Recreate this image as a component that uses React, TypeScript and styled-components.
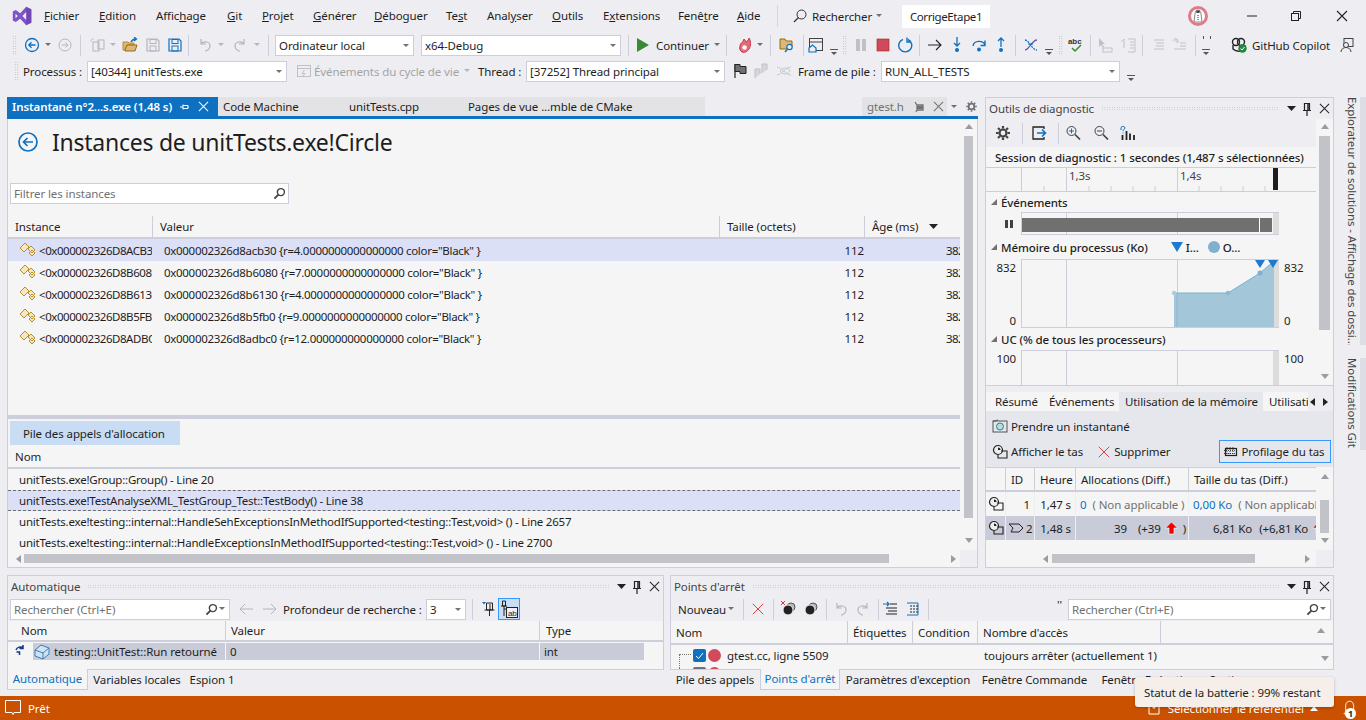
import React from "react";
import styled, { createGlobalStyle } from "styled-components";

const Global = createGlobalStyle`
  html, body { margin: 0; padding: 0; background: #eeeef2; }
  * { box-sizing: border-box; }
  body { font-family: "Noto Sans", "Open Sans", sans-serif; font-size: 11.5px; letter-spacing: -0.1px; color: #1e1e1e; }
`;

const Page = styled.div`
  position: relative; width: 1366px; height: 720px; overflow: hidden; background: #eeeef2;
  display: flex; flex-direction: column;
`;
const Svg = styled.svg`display: block; flex: none;`;

/* ---------- title/menu bar ---------- */
const MenuBar = styled.div`height: 32px; display: flex; align-items: center; padding-left: 12px; flex: none;`;
const LogoSlot = styled.div`width: 32px; flex: none;`;
const MenuItem = styled.div<{ $w: number }>`width: ${p => p.$w}px; flex: none; white-space: nowrap; padding-bottom: 1px;`;
const MenuSep = styled.div`width: 1px; height: 22px; background: #d5d6de; flex: none; margin-right: 15px;`;
const SearchLabel = styled.div`margin-left: 5px; width: 60px; white-space: nowrap;`;
const SolutionBox = styled.div`
  margin-left: 19px; width: 88px; height: 23px; background: #fff; display: flex; align-items: center; justify-content: center;
  white-space: nowrap; flex: none; letter-spacing: -0.4px;
`;
const Avatar = styled.div`
  margin-left: 198px; width: 20px; height: 20px; border-radius: 50%; background: #fff; border: 3px solid #e07a88; flex: none;
  display: flex; align-items: center; justify-content: center; overflow: hidden;
`;
const WinBtn = styled.div<{ $ml: number }>`margin-left: ${p => p.$ml}px; width: 12px; flex: none;`;

/* ---------- toolbars ---------- */
const ToolRow = styled.div<{ $h: number; $pl: number; $mt?: number }>`
  height: ${p => p.$h}px; padding-left: ${p => p.$pl}px; margin-top: ${p => p.$mt ?? 0}px; display: flex; align-items: center; flex: none;
`;
const Tool = styled.div<{ $w?: number; $ml?: number }>`
  width: ${p => p.$w ?? 16}px; margin-left: ${p => p.$ml ?? 0}px; flex: none; display: flex; align-items: center; justify-content: center;
`;
const Grip = styled.div<{ $ml?: number }>`
  width: 5px; height: 20px; margin-left: ${p => p.$ml ?? 0}px; flex: none;
  background-image: radial-gradient(#a9abb8 0.7px, transparent 0.8px); background-size: 2.5px 2.5px;
`;
const Caret = styled.div<{ $ml?: number; $dim?: boolean }>`
  width: 8px; margin-left: ${p => p.$ml ?? 0}px; flex: none; height: 4px; position: relative;
  &::after { content: ""; display: block; margin: 0 auto; width: 0; height: 0; border-left: 3px solid transparent; border-right: 3px solid transparent;
    border-top: 3px solid ${p => (p.$dim ? "#b4b5bd" : "#717171")}; }
`;
const VSep = styled.div<{ $ml?: number }>`width: 1px; height: 21px; margin-left: ${p => p.$ml ?? 0}px; background: #cccedb; flex: none;`;
const Overflow = styled.div<{ $ml?: number; $marks?: boolean }>`
  width: 8px; margin-left: ${p => p.$ml ?? 0}px; margin-top: 13px; flex: none; border-top: 1px solid #555; position: relative;
  &::after { content: ""; display: block; margin: 2px auto 0; width: 0; height: 0; border-left: 3px solid transparent; border-right: 3px solid transparent; border-top: 3px solid #555; }
  ${p => (p.$marks ? `&::before { content: ""; position: absolute; left: 1px; top: -14px; width: 6px; height: 3px; border-left: 1px solid #555; border-right: 1px solid #555; }` : "")}
`;
const Label = styled.div<{ $w: number; $ml?: number; $dim?: boolean }>`
  width: ${p => p.$w}px; margin-left: ${p => p.$ml ?? 0}px; flex: none; white-space: nowrap; color: ${p => (p.$dim ? "#a2a4a5" : "#1e1e1e")};
`;
const TabLabel = styled(Label)`color: #717171;`;
const Marks = styled(Label)`margin-bottom: 10px;`;
const Combo = styled.div<{ $w: number; $ml?: number }>`
  width: ${p => p.$w}px; height: 21px; margin-left: ${p => p.$ml ?? 0}px; flex: none; background: #fff; border: 1px solid #cccedb;
  display: flex; align-items: center; justify-content: space-between; padding: 0 0 0 3px; white-space: nowrap;
  &::after { content: ""; width: 0; height: 0; border-left: 3px solid transparent; border-right: 3px solid transparent; border-top: 3px solid #717171; margin-right: 4px; }
`;

/* ---------- work area ---------- */
const Work = styled.div`margin-top: 14px; display: flex; flex: none; height: 595px;`;
const MainCol = styled.div`width: 1334px; padding-left: 7px; display: flex; flex-direction: column; flex: none;`;
const TopRow = styled.div`display: flex; gap: 7px; height: 471px; flex: none;`;
const BottomRow = styled.div`display: flex; gap: 6px; height: 117px; margin-top: 7px; flex: none;`;
const Rail = styled.div`width: 32px; flex: none; display: flex; flex-direction: column; gap: 13px; padding-top: 0;`;
const RailTab = styled.div<{ $h: number }>`
  height: ${p => p.$h}px; writing-mode: vertical-rl; white-space: nowrap; overflow: hidden; color: #444;
  padding-left: 4px; border-right: 6px solid #dcdde5; line-height: 16px;
`;

/* doc well */
const DocWell = styled.div`width: 971px; display: flex; flex-direction: column; flex: none;`;
const TabStrip = styled.div`height: 22px; border-bottom: 3px solid #0e70c0; display: flex; align-items: stretch; flex: none;`;
const ActiveDoc = styled.div`
  width: 211px; background: #0e70c0; color: #fff; display: flex; align-items: center; padding-left: 5px; font-weight: 600; white-space: nowrap; flex: none;
`;
const DocTab = styled.div<{ $w: number; $bg?: string }>`
  width: ${p => p.$w}px; background: ${p => p.$bg ?? "#e3e3e6"}; display: flex; align-items: center; padding-left: 5px; white-space: nowrap; flex: none;
`;
const TabFill = styled.div`flex: 1;`;
const TabCaret = styled(Caret)`margin-top: 8px;`;
const DocPanel = styled.div`
  flex: 1; min-height: 0; background: #f5f5f5; border: 1px solid #cccedb; border-top: 0; display: grid;
  grid-template-columns: 952px 17px; grid-template-rows: 431px 17px;
`;
const DocLeft = styled.div`display: flex; flex-direction: column; min-width: 0; overflow: hidden;`;
const HeadLine = styled.div`height: 64px; display: flex; align-items: flex-start; padding: 13px 0 0 10px; flex: none;`;
const BigTitle = styled.div`font-size: 23px; line-height: 21px; margin-left: 14px; letter-spacing: -0.25px; white-space: nowrap; color: #1e1e1e;`;
const FilterBox = styled.div`
  width: 279px; height: 21px; margin-left: 2px; background: #fff; border: 1px solid #cccedb; display: flex; align-items: center;
  justify-content: space-between; padding: 0 2px 0 3px; color: #717171; flex: none;
`;
const GridHead = styled.div<{ $mt?: number; $h: number }>`
  height: ${p => p.$h}px; margin-top: ${p => p.$mt ?? 0}px; display: flex; border-bottom: 2px solid #cccedb; flex: none;
`;
const HeadCell = styled.div<{ $w: number; $flex?: boolean }>`
  width: ${p => p.$w}px; flex: none; padding-left: 7px; display: flex; align-items: center; justify-content: ${p => (p.$flex ? "space-between" : "flex-start")};
  border-right: 1px solid #cccedb; white-space: nowrap; padding-right: 22px;
  &:last-child { border-right: 0; }
`;
const InstanceList = styled.div`height: 176px; flex: none; padding-top: 0;`;
const InstanceRow = styled.div<{ $sel?: boolean }>`
  height: 22px; display: flex; align-items: center; background: ${p => (p.$sel ? "#dce0f7" : "transparent")};
`;
const InstName = styled.div`width: 144px; flex: none; overflow: hidden; white-space: nowrap; display: flex; align-items: center; padding-left: 11px; gap: 2px; letter-spacing: -0.45px;`;
const InstValue = styled.div`width: 567px; flex: none; padding-left: 12px; white-space: nowrap; letter-spacing: -0.3px;`;
const InstSize = styled.div`width: 145px; flex: none; text-align: right;`;
const InstAge = styled.div`width: 96px; flex: none; overflow: hidden; padding-left: 82px; white-space: nowrap; letter-spacing: -0.6px;`;
const Splitter = styled.div`height: 6px; flex: none; border-top: 4px solid #cccedb;`;
const SubTab = styled.div`
  width: 170px; height: 24px; margin-left: 2px; background: #c8ddf4; display: flex; align-items: center; padding-left: 13px; flex: none;
`;
const StackRow = styled.div<{ $sel?: boolean }>`
  height: 21px; flex: none; display: flex; align-items: center; padding-left: 11px; white-space: nowrap; overflow: hidden; position: relative;
  ${p => (p.$sel ? "background:#dce0f7; border-top:1px dashed #6d6d6d; border-bottom:1px dashed #6d6d6d;" : "")}
`;
const StackText = styled.div`width: 556px; overflow: hidden; white-space: nowrap; flex: none; letter-spacing: -0.22px;`;

/* scrollbars */
const VTrack = styled.div<{ $pt: number; $w?: number }>`
  width: ${p => p.$w ?? 17}px; display: flex; flex-direction: column; align-items: center; padding-top: ${p => p.$pt}px; flex: none; position: relative; min-height: 0;
`;
const VThumb = styled.div<{ $h: number; $mt: number; $w?: number }>`width: ${p => p.$w ?? 9}px; height: ${p => p.$h}px; margin-top: ${p => p.$mt}px; background: #c2c3c9; flex: none;`;
const ArrowUp = styled.div`width: 0; height: 0; border-left: 4.5px solid transparent; border-right: 4.5px solid transparent; border-bottom: 5px solid #9a9ba3; flex: none;`;
const ArrowDown = styled.div<{ $mt: number }>`width: 0; height: 0; margin-top: ${p => p.$mt}px; border-left: 4.5px solid transparent; border-right: 4.5px solid transparent; border-top: 5px solid #9a9ba3; flex: none;`;
const HTrack = styled.div<{ $pl: number }>`display: flex; align-items: center; padding-left: ${p => p.$pl}px; height: 17px; flex: none; min-width: 0;`;
const HThumb = styled.div<{ $w: number; $ml: number }>`width: ${p => p.$w}px; height: 9px; margin-left: ${p => p.$ml}px; background: #c2c3c9; flex: none;`;
const ArrowLeft = styled.div`width: 0; height: 0; border-top: 4.5px solid transparent; border-bottom: 4.5px solid transparent; border-right: 5px solid #9a9ba3; flex: none;`;
const ArrowRight = styled.div<{ $ml: number }>`width: 0; height: 0; margin-left: ${p => p.$ml}px; border-top: 4.5px solid transparent; border-bottom: 4.5px solid transparent; border-left: 5px solid #9a9ba3; flex: none;`;
const Corner = styled.div`background: #eeeef2;`;

/* tool window chrome */
const ToolWin = styled.div<{ $w: number }>`width: ${p => p.$w}px; flex: none; display: flex; flex-direction: column; min-height: 0;`;
const ToolBox = styled.div<{ $h?: number }>`
  border: 1px solid #cccedb; display: flex; flex-direction: column; background: #eeeef2; min-height: 0;
  ${p => (p.$h ? `height: ${p.$h}px; flex: none;` : "flex: 1;")}
`;
const WinTitle = styled.div`height: 21px; display: flex; align-items: center; padding: 0 3px 0 3px; flex: none;`;
const WinName = styled.div`white-space: nowrap; color: #444; flex: none;`;
const Dots = styled.div`
  flex: 1; height: 5px; margin: 0 8px 0 7px;
  background-image: radial-gradient(#b4b6c4 0.6px, transparent 0.7px); background-size: 2.5px 2.5px;
`;

/* diagnostics */
const DiagBody = styled.div`height: 266px; display: grid; grid-template-columns: 1fr 17px; background: #f5f5f5; flex: none; overflow: hidden; padding-top: 0;`;
const DiagMain = styled.div`min-width: 0; display: flex; flex-direction: column; overflow: hidden;`;
const DiagBar = styled.div`height: 28px; background: #eeeef2; display: flex; align-items: center; padding-left: 9px; flex: none;`;
const Session = styled.div`height: 21px; padding-left: 9px; display: flex; align-items: center; font-weight: 500; white-space: nowrap; border-bottom: 1px solid #cccedb; flex: none; font-size: 11.5px;`;
const Ruler = styled.div`height: 24px; margin-bottom: 0; border-bottom: 1px solid #cccedb; flex: none;`;
const SectionHead = styled.div<{ $h: number }>`height: ${p => p.$h}px; display: flex; align-items: center; padding-left: 5px; font-weight: 500; white-space: nowrap; flex: none;`;
const Tri = styled.span`
  display: inline-block; width: 0; height: 0; border-left: 6px solid transparent; border-bottom: 6px solid #717171; margin-right: 4px;
`;
const LegendMark = styled.span<{ $ml: number }>`margin-left: ${p => p.$ml}px; display: inline-flex; margin-right: 3px;`;
const ChartRow = styled.div<{ $h: number }>`height: ${p => p.$h}px; display: grid; grid-template-columns: 35px 258px 1fr; flex: none;`;
const AxisCol = styled.div<{ $left?: boolean }>`
  display: flex; flex-direction: column; justify-content: space-between; padding: 1px ${p => (p.$left ? "5px" : "0")} 0 ${p => (p.$left ? "0" : "5px")};
  text-align: ${p => (p.$left ? "right" : "left")}; line-height: 15px; align-items: ${p => (p.$left ? "flex-end" : "flex-start")};
`;
const PauseCol = styled.div`display: flex; align-items: center; justify-content: flex-end; padding-right: 8px; gap: 2px;`;
const PauseBar = styled.div`width: 3px; height: 8px; background: #424242;`;
const LowerSplit = styled.div`height: 7px; flex: none; background: #eeeef2; border-top: 1px solid #cccedb;`;
const SubTabs = styled.div`height: 19px; background: #f5f5f5; display: flex; align-items: center; padding-left: 3px; flex: none;`;
const SubTabItem = styled.div<{ $w: number; $on?: boolean }>`
  width: ${p => p.$w}px; height: 19px; flex: none; display: flex; align-items: center; padding-left: 6px; white-space: nowrap; overflow: hidden;
  background: ${p => (p.$on ? "#e6e7ed" : "transparent")};
`;
const ArrowPair = styled.div`display: flex; gap: 8px; align-items: center; height: 19px; padding-left: 2px; background: #eeeef2; width: 25px;`;
const MiniL = styled.div`width: 0; height: 0; border-top: 4px solid transparent; border-bottom: 4px solid transparent; border-right: 5px solid #222;`;
const MiniR = styled.div`width: 0; height: 0; border-top: 4px solid transparent; border-bottom: 4px solid transparent; border-left: 5px solid #222;`;
const SnapPanel = styled.div`height: 56px; background: #e6e7ed; display: flex; flex-direction: column; flex: none; padding: 3px 0 0 6px;`;
const SnapLine = styled.div<{ $h: number }>`height: ${p => p.$h}px; display: flex; align-items: center; white-space: nowrap;`;
const SnapBtn = styled.div<{ $ml?: number }>`display: flex; align-items: center; gap: 3px; margin-left: ${p => p.$ml ?? 0}px; flex: none;`;
const HeapBtn = styled.div`
  margin-left: 48px; width: 112px; height: 23px; border: 1px solid #3399ff; display: flex; align-items: center; gap: 3px; padding-left: 3px; flex: none; background: #e6e7ed;
`;
const SnapGrid = styled.div`height: 83px; display: grid; grid-template-columns: 330px 17px; background: #f5f5f5; flex: none;`;
const SnapCols = styled.div`min-width: 0; overflow: hidden; display: flex; flex-direction: column;`;
const SnapHead = styled.div`height: 25px; display: grid; grid-template-columns: 20px 29px 41px 113px 127px; border-top: 1px solid #cccedb; border-bottom: 2px solid #cccedb; flex: none;`;
const SnapHeadCell = styled.div`display: flex; align-items: center; padding-left: 5px; border-right: 1px solid #cccedb; white-space: nowrap; overflow: hidden; &:last-child { border-right: 0; }`;
const SnapRow = styled.div<{ $sel?: boolean }>`
  height: 24px; display: grid; grid-template-columns: 20px 29px 41px 113px 127px; flex: none; background: ${p => (p.$sel ? "#c9cbd9" : "transparent")};
`;
const SnapCell = styled.div<{ $right?: boolean; $pad?: number }>`
  display: flex; align-items: center; justify-content: ${p => (p.$right ? "flex-end" : "flex-start")}; padding: 0 ${p => (p.$right ? 4 : 0)}px 0 ${p => p.$pad ?? 0}px;
  white-space: nowrap; overflow: hidden; border-right: 1px solid #eeeeee; &:last-child { border-right: 0; }
`;
const Blue = styled.span`color: #0e70c0;`;
const Gray = styled.span<{ $ml?: number }>`color: #717171; margin-left: ${p => p.$ml ?? 0}px;`;
const Plain = styled.span<{ $ml?: number }>`margin-left: ${p => p.$ml ?? 0}px; flex: none; display: inline-flex; align-items: center;`;
const SnapBottom = styled.div`height: 17px; display: grid; grid-template-columns: 330px 17px; background: #f5f5f5; flex: none;`;

/* lower panels */
const PanelBar = styled.div<{ $pl?: number }>`height: 24px; display: flex; align-items: center; flex: none; padding-left: ${p => p.$pl ?? 2}px;`;
const SearchBox = styled.div<{ $w: number; $ml?: number }>`
  width: ${p => p.$w}px; height: 21px; margin-left: ${p => p.$ml ?? 0}px; background: #fff; border: 1px solid #cccedb; display: flex; align-items: center; flex: none;
  justify-content: space-between; padding: 0 3px 0 3px; color: #717171; white-space: nowrap;
`;
const PinBox = styled.div`width: 22px; height: 22px; margin-left: 1px; background: #c9def5; border: 1px solid #3399ff; flex: none; display: flex; align-items: center; justify-content: center;`;
const TableArea = styled.div`flex: 1; background: #f5f5f5; min-height: 0; overflow: hidden; display: flex; flex-direction: column;`;
const THead = styled.div<{ $h: number }>`height: ${p => p.$h}px; display: flex; border-bottom: 2px solid #cccedb; flex: none;`;
const THCell = styled.div<{ $w: number; $pl?: number; $last?: boolean }>`
  width: ${p => p.$w}px; flex: none; display: flex; align-items: center; padding-left: ${p => p.$pl ?? 5}px;
  border-right: ${p => (p.$last ? "0" : "1px solid #cccedb")}; white-space: nowrap;
`;
const HeadArrow = styled.div`margin: 7px 8px 0 auto; flex: none;`;
const AutoRow = styled.div`display: flex; align-items: stretch; height: 17px; margin-top: 1px; flex: none;`;
const AutoGutter = styled.div`width: 25px; flex: none; padding: 1px 0 0 6px;`;
const AutoCell = styled.div<{ $w: number; $pl?: number }>`
  width: ${p => p.$w}px; flex: none; background: #c9cbd9; display: flex; align-items: center; padding-left: ${p => p.$pl ?? 4}px; border-right: 1px solid #f5f5f5; white-space: nowrap; gap: 4px;
`;
const BpGrid = styled.div`flex: 1; display: grid; grid-template-columns: 1fr 17px; min-height: 0;`;
const BpList = styled.div`overflow: hidden; min-height: 0;`;
const BpRow = styled.div<{ $top?: boolean }>`height: 22px; display: flex; align-items: ${p => (p.$top ? "flex-start" : "center")}; flex: none; padding-bottom: ${p => (p.$top ? 0 : 1)}px;`;
const BpName = styled.div<{ $top?: boolean }>`width: 313px; flex: none; display: flex; align-items: ${p => (p.$top ? "flex-start" : "center")}; padding-left: 8px; gap: 2px; white-space: nowrap;`;
const TreeDots = styled.div`width: 12px; height: 14px; margin-top: 10px; border-left: 1px dotted #777; border-top: 1px dotted #777; flex: none;`;
const TreeStem = styled.div`width: 12px; height: 4px; border-left: 1px dotted #777; flex: none;`;
const Check = styled.div<{ $dim?: boolean }>`width: 13px; height: 13px; border-radius: 2px; background: ${p => (p.$dim ? "#717171" : "#0e70c0")}; flex: none; display: flex; align-items: center; justify-content: center;`;
const BpDot = styled.div`width: 13px; height: 13px; border-radius: 50%; background: #d1495b; flex: none;`;
const PanelTabs = styled.div`height: 20px; display: flex; flex: none; white-space: nowrap; margin-top: -1px;`;
const PanelTab = styled.div<{ $w: number; $on?: boolean }>`
  width: ${p => p.$w}px; flex: none; height: 21px; display: flex; align-items: center; justify-content: center; padding-bottom: 1px;
  ${p => (p.$on ? "background:#f5f5f5; color:#0e70c0; border:1px solid #cccedb; border-top:0;" : "")}
`;

/* status */
const Status = styled.div`
  height: 24px; margin-top: 4px; background: #ca5100; color: #fff; display: flex; align-items: center; padding-left: 5px; flex: none;
`;
const StatusText = styled.div<{ $ml: number }>`margin-left: ${p => p.$ml}px; white-space: nowrap; flex: none; color: #fff;`;
const Badge = styled.div`
  position: absolute; right: 10px; top: 12px; width: 11px; height: 11px; border-radius: 50%; background: #fff; color: #1e1e1e; font-size: 9px; font-weight: 700;
  display: flex; align-items: center; justify-content: center; letter-spacing: 0;
`;
const BellWrap = styled.div`position: absolute; right: 0; bottom: 0; width: 32px; height: 24px; display: flex; align-items: center; padding-left: 9px;`;
const Tip = styled.div`
  position: absolute; left: 1135px; top: 677px; width: 199px; height: 30px; background: #f6efe9; border-radius: 3px; box-shadow: 0 1px 3px rgba(0,0,0,.25);
  display: flex; align-items: center; padding-left: 9px; white-space: nowrap; color: #1e1e1e;
`;

/* ---------- icons ---------- */
type P = { s?: number; c?: string };
const I: React.FC<{ s?: number; children: React.ReactNode }> = ({ s = 16, children }) => (
  <Svg width={s} height={s} viewBox="0 0 16 16" fill="none">{children}</Svg>
);
const Logo = () => (
  <Svg width="20" height="20" viewBox="0 0 20 20">
    <path fillRule="evenodd" fill="#7d55c7" d="M14.2 0.8 19.4 3.3V16.7L14.2 19.2 8.2 12.8 3.8 16 0.8 14.4V5.6L3.8 4 8.2 7.2ZM14.2 6 10.4 10 14.2 14ZM3.5 7.8V12.2L5.9 10Z" />
    <path fill="#5c2d91" d="M14.2 0.8 19.4 3.3V16.7L14.2 19.2Z" opacity=".35" />
  </Svg>
);
const ArrowBack: React.FC<{ c?: string }> = ({ c = "#0e70c0" }) => (
  <I><circle cx="8" cy="8" r="6.5" stroke={c} strokeWidth="1.3" /><path d="M11.5 8H5M7.5 5.3 4.8 8l2.7 2.7" stroke={c} strokeWidth="1.3" /></I>
);
const ArrowFwd = () => (
  <I><circle cx="8" cy="8" r="6" stroke="#b4b5bd" /><path d="M4.5 8H11M8.5 5.5 11 8l-2.5 2.5" stroke="#b4b5bd" /></I>
);
const CopyDim = () => (
  <I><path d="M2 2l1 1M4 1v2M1 4h2" stroke="#c6c7cf" /><rect x="4" y="5" width="6" height="9" stroke="#b4b5bd" /><rect x="9" y="3" width="6" height="9" stroke="#b4b5bd" /></I>
);
const OpenFolder = () => (
  <I><path d="M1 5h5l1 1h5v2H5L3 13H1Z" fill="#dcb67a" stroke="#b58a3a" /><path d="M3 13 5 8h10l-2 6H3Z" fill="#dcb67a" stroke="#996f00" /><path d="M9 5c1-2 3-3 5-3M12 0l2.5 2L12 4" stroke="#0e70c0" strokeWidth="1.3" /></I>
);
const Save: React.FC<{ c: string }> = ({ c }) => (
  <I><path d="M2 2h10l2 2v10H2Z" stroke={c} strokeWidth="1.2" /><rect x="5" y="2.5" width="6" height="4" stroke={c} /><rect x="5" y="9" width="6" height="5" stroke={c} /></I>
);
const Undo = () => <I><path d="M4 2v5h5M4 7c2-3 9-3 9 2 0 3-3 5-5 5" stroke="#b4b5bd" strokeWidth="1.2" /></I>;
const Redo = () => <I><path d="M12 2v5H7M12 7c-2-3-9-3-9 2 0 3 3 5 5 5" stroke="#b4b5bd" strokeWidth="1.2" /></I>;
const Play = () => <Svg width="14" height="16" viewBox="0 0 14 16"><path d="M1 1 13 8 1 15Z" fill="#388a34" /></Svg>;
const Fire = () => (
  <I><path d="M3 9c0-3 3-3 4-7 1 1 2 2 2 3 2-1 3-3 3-4 2 3 2 8 0 11-2 3-5 4-7 3s-3-4-2-6Z" fill="#e66a78" stroke="#c5364a" /><circle cx="7.5" cy="10.5" r="2.3" fill="#fff" /></I>
);
const SearchFolder = () => (
  <I><path d="M1 2h5l1 2h6v5H9l-2 3H1Z" fill="#dcb67a" stroke="#996f00" /><circle cx="10.5" cy="10" r="2.7" stroke="#0e70c0" strokeWidth="1.2" fill="#eeeef2" /><path d="M8.5 12.2 6 15" stroke="#0e70c0" strokeWidth="1.5" /></I>
);
const WinHome = () => (
  <I><rect x="1.5" y="1.5" width="13" height="12" stroke="#424242" /><path d="M1.5 5h13" stroke="#424242" /><path d="M1 11 4.500 8 8 11v4H1Z" fill="#eeeef2" stroke="#0e70c0" strokeWidth="1.2" /></I>
);
const Pause2 = () => <I><rect x="3" y="2" width="4" height="12" fill="#c0c1c8" /><rect x="9" y="2" width="4" height="12" fill="#c0c1c8" /></I>;
const Stop = () => <I><rect x="2" y="2" width="12" height="12" fill="#d1495b" stroke="#a1260d" strokeWidth=".6" /></I>;
const Restart = () => <I><path d="M6 2.300A6.500 6.500 0 1 0 11 2.500M10 0.500V5h4" stroke="#0e70c0" strokeWidth="1.4" /></I>;
const ArrowNext = () => <I><path d="M1 8h13M9 3l5 5-5 5" stroke="#222" strokeWidth="1.1" /></I>;
const StepInto = () => <I><path d="M8 0v9M5 6l3 3 3-3" stroke="#0e70c0" strokeWidth="1.3" /><circle cx="8" cy="13" r="2" fill="#0e70c0" /></I>;
const StepOver = () => <I><path d="M2 9C3 3 12 3 14 8M14 3.500V8.500H9.500" stroke="#0e70c0" strokeWidth="1.4" /><circle cx="8" cy="12.500" r="2" fill="#0e70c0" /></I>;
const StepOut = () => <I><path d="M8 10V1M5 4l3-3 3 3" stroke="#0e70c0" strokeWidth="1.3" /><circle cx="8" cy="13" r="2" fill="#0e70c0" /></I>;
const Swap = () => <I><path d="M2 13C6 13 9 3 14 3" stroke="#6b52a8" strokeWidth="1.3" /><path d="M2 3C6 3 9 13 14 13" stroke="#0e70c0" strokeWidth="1.3" strokeDasharray="2 1" /><path d="M5 7h5" stroke="#0e70c0" /></I>;
const Abc = () => (
  <I><text x="0" y="7" fontSize="8" fill="#333" fontFamily="Liberation Sans" fontWeight="700">abc</text><path d="M4 11l3 3 6-6" stroke="#388a34" strokeWidth="1.5" /></I>
);
const CursorDim = () => <I><path d="M2 1v9l2-2 2 3 1-1-2-3h3Z" fill="#c0c1c8" /><rect x="6" y="11" width="9" height="4" stroke="#c0c1c8" /></I>;
const LinesDim = () => <I><path d="M1 5l3-3v9M8 2h7v13H8M10 5h4M10 8h4M10 11h4" stroke="#c0c1c8" /></I>;
const IndentDim = () => <I><path d="M3 3h10M5 6h8M5 9h8M3 12h10" stroke="#c0c1c8" /></I>;
const OutdentDim = () => <I><path d="M2 4c1-3 5-3 5 0M5 2v3h3M9 6h6M9 9h6M3 12h12" stroke="#c0c1c8" /></I>;
const Copilot = () => (
  <I><circle cx="5" cy="5" r="3.500" stroke="#222" strokeWidth="1.4" /><circle cx="10" cy="5" r="3.500" stroke="#222" strokeWidth="1.4" /><path d="M2 8v4c3 3 9 3 12 0V8" stroke="#222" strokeWidth="1.4" /><circle cx="11.500" cy="11.500" r="4.200" fill="#1f883d" /><path d="M9.500 11.500l1.500 1.500 2.500-3" stroke="#fff" /></I>
);
const Person = () => <I><rect x="5" y="1.500" width="9" height="8" stroke="#424242" /><circle cx="7" cy="8" r="2.500" fill="#eeeef2" stroke="#424242" /><path d="M2 15c0-6 10-6 10 0" fill="#eeeef2" stroke="#424242" /></I>;
const Lifecycle = () => <I><rect x="1.500" y="2.500" width="13" height="11" stroke="#c0c1c8" /><path d="M1.500 5.500h13M8.500 7 6 10.500h3L7 13" stroke="#c0c1c8" /></I>;
const Flag = () => <I><path d="M3 1v14" stroke="#222" strokeWidth="1.2" /><path d="M3 1.500h5v2h6v7H8v-2H3Z" fill="#717171" stroke="#222" /></I>;
const FlagsDim = () => <I><path d="M2 15V6h5v5M9 10V1h5v6" fill="#d5d6dc" stroke="#c0c1c8" /></I>;
const FishDim = () => <I><path d="M1 4c4 0 9 8 14 8M1 12c4 0 9-8 14-8M4 8c3-4 8-4 10 0-2 4-7 4-10 0" stroke="#c6c7cf" /></I>;
const SearchGlass: React.FC<P> = ({ s = 14, c = "#424242" }) => (
  <Svg width={s} height={s} viewBox="0 0 14 14" fill="none"><circle cx="8.500" cy="5.500" r="3.800" stroke={c} strokeWidth="1.5" /><path d="M5.800 8.200 1.500 12.500" stroke={c} strokeWidth="2" /></Svg>
);
const ThinGlass = () => (
  <Svg width="14" height="14" viewBox="0 0 14 14" fill="none"><circle cx="8.500" cy="5.500" r="4.500" stroke="#333" /><path d="M5.500 8.500 1 13" stroke="#333" strokeWidth="1.2" /></Svg>
);
const Minimize = () => <Svg width="12" height="12" viewBox="0 0 12 12"><path d="M1 6h10" stroke="#222" /></Svg>;
const Restore = () => <Svg width="12" height="12" viewBox="0 0 12 12" fill="none"><rect x="1.500" y="3.500" width="7" height="7" stroke="#222" /><path d="M3.500 3V1.500h7v7H9" stroke="#222" /></Svg>;
const CloseX: React.FC<P> = ({ s = 12, c = "#222" }) => <Svg width={s} height={s} viewBox="0 0 12 12"><path d="M1 1l10 10M11 1 1 11" stroke={c} strokeWidth="1.100" /></Svg>;
const Penguin = () => (
  <Svg width="14" height="14" viewBox="0 0 14 14"><path d="M7 1c2 0 3 2 3 4l1 8H3l1-8c0-2 1-4 3-4Z" fill="#fff" stroke="#666" strokeWidth=".8" /><path d="M5 1.500h4L8.500 4h-3Z" fill="#444" /><path d="M7 6v6" stroke="#333" strokeDasharray="1 1" /></Svg>
);
const PinTab = () => <Svg width="10" height="10" viewBox="0 0 10 10" fill="none"><path d="M0 5h3M3 2.500v5M3 3.500h5v3H3M8 4.500v1" stroke="#fff" /></Svg>;
const PinSmall = () => <Svg width="12" height="12" viewBox="0 0 12 12" fill="none"><path d="M2 1l2 3h6v5H4L3 11M4 4v5" stroke="#717171" strokeWidth="1.300" /><path d="M4 5h6v3H4Z" fill="#717171" /></Svg>;
const DownSolid = () => <Svg width="9" height="6" viewBox="0 0 9 6"><path d="M0 0h9L4.500 5Z" fill="#222" /></Svg>;
const GearDim = () => (
  <I s={13}><circle cx="8" cy="8" r="3.500" stroke="#717171" strokeWidth="2.200" /><path d="M8 1.500v2M8 12.500v2M1.500 8h2M12.500 8h2M3.400 3.400l1.400 1.400M11.200 11.200l1.400 1.400M12.600 3.400l-1.400 1.400M4.800 11.200l-1.400 1.400" stroke="#717171" strokeWidth="2" /></I>
);
const Gear = () => (
  <I><circle cx="8" cy="8" r="3.500" stroke="#424242" strokeWidth="2.200" /><path d="M8 1v2.500M8 12.500V15M1 8h2.500M12.500 8H15M3 3l1.800 1.800M11.200 11.200 13 13M13 3l-1.800 1.800M4.800 11.200 3 13" stroke="#424242" strokeWidth="2.200" /></I>
);
const Pin: React.FC = () => <Svg width="12" height="14" viewBox="0 0 12 14" fill="none"><path d="M3.500 1.500h5v7h-5ZM2 8.500h8M6 8.500V14" stroke="#222" strokeWidth="1.200" /><path d="M7 2v6" stroke="#222" strokeWidth="1.500" /></Svg>;
const Export = () => <I><path d="M13 4V2H2v12h11v-2" stroke="#222" strokeWidth="1.300" /><path d="M6 8h9M11 4.500 14.500 8 11 11.500" stroke="#0e70c0" strokeWidth="1.600" /></I>;
const ZoomGlass: React.FC<{ plus?: boolean }> = ({ plus }) => (
  <I><circle cx="6.500" cy="6" r="4.500" stroke="#424242" /><path d="M10 9.500l5 5" stroke="#424242" strokeWidth="1.700" /><path d={plus ? "M4 6h5M6.500 3.500v5" : "M4 6h5"} stroke={plus ? "#0e70c0" : "#424242"} /></I>
);
const ChartQ = () => (
  <I><path d="M1 5V2.500C2 1 5 1 5 3 5 4.500 3 4 3 6" stroke="#0e70c0" fill="none" /><path d="M3 7.500v1" stroke="#0e70c0" /><path d="M2.500 10v5M6.500 6v9M10 8.500V15M14 10v5" stroke="#222" strokeWidth="1.800" /></I>
);
const Instance = () => (
  <Svg width="18" height="16" viewBox="0 0 18 16" fill="none">
    <path d="M1 6 6 1l4 4-5 5Z" fill="#f5e6c4" stroke="#b6902f" /><path d="M9 7l3-3 4 4-3 3ZM10 11l3 3 3-3-3-3Z" fill="#f5e6c4" stroke="#b6902f" />
  </Svg>
);
const Camera = () => <I><rect x="1" y="3" width="14" height="11" stroke="#555" /><circle cx="8" cy="8.500" r="3.500" fill="#b8dce0" stroke="#1b8a8f" /><path d="M1 3h3l1-1h1" stroke="#555" /></I>;
const Heap = () => <I><circle cx="6" cy="6" r="4.500" fill="#eee" stroke="#222" strokeWidth="1.200" /><path d="M6 6V3.500A2.500 2.500 0 0 1 8.500 6Z" fill="#222" /><path d="M9 7h6v7H6v-3" stroke="#222" strokeWidth="1.100" /></I>;
const XRed: React.FC<{ s?: number }> = ({ s = 16 }) => <Svg width={s} height={s} viewBox="0 0 16 16"><path d="M2 2l12 12M14 2 2 14" stroke="#d9383a" strokeWidth="1.100" /></Svg>;
const Chip = () => <I><rect x="2.500" y="4.500" width="11" height="7" stroke="#222" strokeWidth="1.200" /><path d="M1 6.500h14M1 9.500h14M4 3v10M7 3v10M10 3v10" stroke="#222" strokeDasharray="1 1" opacity=".8" /></I>;
const Tag = () => <Svg width="16" height="10" viewBox="0 0 16 10" fill="none"><path d="M1 1h10l4 4-4 4H3l2-4Z" stroke="#222" /></Svg>;
const RedUp: React.FC = () => <Svg width="13" height="14" viewBox="0 0 13 14"><path d="M6.500 1 12.500 7H9v6H4V7H.5Z" fill="#f00000" stroke="#fff" strokeWidth=".6" /></Svg>;
const ArrowThin: React.FC<{ dir: 1 | -1 }> = ({ dir }) => (
  <I><path d={dir < 0 ? "M15 8H2M7 3 2 8l5 5" : "M1 8h13M9 3l5 5-5 5"} stroke="#b4b5bd" /></I>
);
const FilterPin = () => <I><path d="M1 1h4L3 3.500Z" fill="#0e70c0" /><path d="M5.500 2h6v7h-6ZM3.500 9h10M8.500 9v6M9 3v6" stroke="#222" /></I>;
const AbPin = () => (
  <Svg width="18" height="18" viewBox="0 0 18 18" fill="none"><path d="M2.500 1h3v5h-3ZM1 6h6M4 6v10M4 9h3" stroke="#222" /><rect x="6.500" y="7.500" width="11" height="10" fill="#eef" stroke="#222" /><text x="8" y="15.500" fontSize="8" fontFamily="Liberation Sans" fill="#222">ab</text></Svg>
);
const ReturnIcon = () => <Svg width="12" height="12" viewBox="0 0 12 12" fill="none"><path d="M2 6c1-3 5-4 7-2M9 1v3.500H5.500" stroke="#0e3a8a" strokeWidth="1.500" /><path d="M2.500 8h3v3" stroke="#0e3a8a" strokeWidth="1.500" /></Svg>;
const Cube = () => <I><path d="M1 6 7 1l8 3v6l-6 5-8-3Z" fill="#cfe3f5" stroke="#3e7cb8" /><path d="M1 6l8 3 6-5M9 9v6" stroke="#3e7cb8" /></I>;
const Balls: React.FC<{ x?: boolean }> = ({ x }) => (
  <I><circle cx="10" cy="6" r="4" fill="#bbb" stroke="#555" /><circle cx="7" cy="9" r="5" fill="#222" stroke="#eeeef2" />{x ? <path d="M0 0l4 4M4 0 0 4" stroke="#d9383a" /> : null}</I>
);
const ImportList = () => <I><path d="M1 3h6M5 1l2 2-2 2" stroke="#0e70c0" strokeWidth="1.200" /><path d="M8 3h7M4 7h11M6 10h9M4 13h11" stroke="#222" /></I>;
const ExportList = () => <I><path d="M3 2h11v12H3" stroke="#0e70c0" /><path d="M6 5h8M6 8h8M6 11h8" stroke="#222" strokeDasharray="2 1" /></I>;
const CheckMark = () => <Svg width="9" height="8" viewBox="0 0 9 8" fill="none"><path d="M1 4l2.500 2.500L8 1" stroke="#fff" /></Svg>;
const Comment = () => <Svg width="16" height="18" viewBox="0 0 16 18" fill="none"><path d="M.5 1.500h15v12H9l-1 2-1-2H.5Z" stroke="#fff" /></Svg>;
const Repo = () => <Svg width="12" height="14" viewBox="0 0 12 14" fill="none"><path d="M1 1h10v12H1ZM5 3h2v4H5ZM4 1v3" stroke="#fff" /></Svg>;
const UpCaret = () => <Svg width="8" height="5" viewBox="0 0 8 5"><path d="M0 5 4 0l4 5Z" fill="#fff" /></Svg>;
const Bell = () => <Svg width="16" height="19" viewBox="0 0 18 20" fill="none"><path d="M3 14V7c0-7 9-7 9 0v7l2 2H1ZM6 17c.5 1.500 2.500 1.500 3 0" stroke="#fff" /></Svg>;

const WinControls: React.FC = () => (
  <>
    <DownSolid />
    <Tool $w={12} $ml={5}><Pin /></Tool>
    <Tool $w={12} $ml={5}><CloseX s={11} /></Tool>
  </>
);

const Event = () => (
  <Svg width="258" height="23" viewBox="0 0 258 23">
    <rect x=".5" y=".5" width="257" height="22" fill="#f5f5f5" stroke="#cccedb" />
    <rect x="252" y="1" width="6" height="21" fill="#dcdcdc" />
    <path d="M45.500 1v21M156.500 1v21" stroke="#cccedb" />
    <rect x="1" y="6" width="250" height="14" fill="#707070" />
    <rect x="238" y="6" width="1" height="14" fill="#fff" />
  </Svg>
);
const Tri2: React.FC<{ x: number; y: number }> = ({ x, y }) => <path d={`M${x - 5} ${y}h10l-5 8Z`} fill="#1e7ad1" />;
const Memory = () => (
  <Svg width="258" height="69" viewBox="0 0 258 69">
    <rect x=".5" y=".5" width="257" height="68" fill="#f5f5f5" stroke="#cccedb" />
    <rect x="252" y="1" width="6" height="67" fill="#dcdcdc" />
    <path d="M45.500 1v67M156.500 1v67" stroke="#cccedb" />
    <path d="M153 34H207L239 14 253 2V68H153Z" fill="#a3c6d9" />
    <path d="M153 34H207L239 14 253 2" stroke="#7fb0cd" fill="none" />
    <path d="M156 34v34" stroke="#8cb8d1" />
    <circle cx="153" cy="34" r="2.200" fill="#a9cde0" />
    <circle cx="207" cy="34" r="2.200" fill="#8cb8d1" />
    <circle cx="239" cy="14" r="2.500" fill="#7fb0cd" />
    <Tri2 x={239} y={1} /><Tri2 x={252} y={1} />
  </Svg>
);
const Cpu = () => (
  <Svg width="258" height="40" viewBox="0 0 258 40">
    <rect x=".5" y=".5" width="257" height="44" fill="#f5f5f5" stroke="#cccedb" />
    <rect x="252" y="1" width="6" height="40" fill="#dcdcdc" />
    <path d="M45.500 1v40M156.500 1v40" stroke="#cccedb" />
  </Svg>
);
const RulerArt = () => (
  <Svg width="293" height="23" viewBox="0 0 293 23" fill="none">
    <path d="M35.500 0v23M80.500 0v23M191.500 0v23" stroke="#cccedb" />
    <path d="M58 18v5M103 18v5M125 18v5M147 18v5M169 18v5M213 18v5M235 18v5M257 18v5M279 18v5" stroke="#cccedb" />
    <text x="83" y="12" fontSize="11.500" fill="#444" fontFamily="Noto Sans">1,3s</text>
    <text x="194" y="12" fontSize="11.500" fill="#444" fontFamily="Noto Sans">1,4s</text>
    <rect x="287" y="0" width="5" height="22" fill="#1e1e1e" />
  </Svg>
);

const instances = [
  ["<0x000002326D8ACB30", "0x000002326d8acb30 {r=4.0000000000000000 color=\"Black\" }"],
  ["<0x000002326D8B6080", "0x000002326d8b6080 {r=7.0000000000000000 color=\"Black\" }"],
  ["<0x000002326D8B6130", "0x000002326d8b6130 {r=4.0000000000000000 color=\"Black\" }"],
  ["<0x000002326D8B5FB0", "0x000002326d8b5fb0 {r=9.0000000000000000 color=\"Black\" }"],
  ["<0x000002326D8ADBC0", "0x000002326d8adbc0 {r=12.000000000000000 color=\"Black\" }"],
];
const stack = [
  "unitTests.exe!Group::Group() - Line 20",
  "unitTests.exe!TestAnalyseXML_TestGroup_Test::TestBody() - Line 38",
  "unitTests.exe!testing::internal::HandleSehExceptionsInMethodIfSupported<testing::Test,void> () - Line 2657",
  "unitTests.exe!testing::internal::HandleExceptionsInMethodIfSupported<testing::Test,void> () - Line 2700",
];

export default function App() {
  return (
    <Page>
      <Global />
      <MenuBar>
        <LogoSlot><Logo /></LogoSlot>
        <MenuItem $w={55}><u>F</u>ichier</MenuItem>
        <MenuItem $w={57}><u>E</u>dition</MenuItem>
        <MenuItem $w={71}>Affic<u>h</u>age</MenuItem>
        <MenuItem $w={35}><u>G</u>it</MenuItem>
        <MenuItem $w={51}><u>P</u>rojet</MenuItem>
        <MenuItem $w={61}><u>G</u>énérer</MenuItem>
        <MenuItem $w={72}><u>D</u>éboguer</MenuItem>
        <MenuItem $w={41}>Te<u>s</u>t</MenuItem>
        <MenuItem $w={65}>Anal<u>y</u>ser</MenuItem>
        <MenuItem $w={51}><u>O</u>utils</MenuItem>
        <MenuItem $w={75}>E<u>x</u>tensions</MenuItem>
        <MenuItem $w={59}>Fenê<u>t</u>re</MenuItem>
        <MenuItem $w={40}><u>A</u>ide</MenuItem>
        <MenuSep />
        <ThinGlass />
        <SearchLabel>Rechercher</SearchLabel>
        <Caret $ml={3} />
        <SolutionBox>CorrigeEtape1</SolutionBox>
        <Avatar><Penguin /></Avatar>
        <WinBtn $ml={38}><Minimize /></WinBtn>
        <WinBtn $ml={32}><Restore /></WinBtn>
        <WinBtn $ml={34}><CloseX /></WinBtn>
      </MenuBar>

      <ToolRow $h={28} $pl={12} $mt={-1}>
        <Grip />
        <Tool $ml={7}><ArrowBack /></Tool>
        <Caret $ml={4} />
        <Tool $ml={5}><ArrowFwd /></Tool>
        <VSep $ml={7} />
        <Tool $ml={8}><CopyDim /></Tool>
        <Caret $ml={4} $dim />
        <Tool $ml={5}><OpenFolder /></Tool>
        <Tool $ml={7}><Save c="#b4b5bd" /></Tool>
        <Tool $ml={6}><Save c="#0e70c0" /></Tool>
        <VSep $ml={5} />
        <Tool $ml={8}><Undo /></Tool>
        <Caret $ml={4} $dim />
        <Tool $ml={7}><Redo /></Tool>
        <Caret $ml={5} $dim />
        <VSep $ml={7} />
        <Combo $w={139} $ml={6}>Ordinateur local</Combo>
        <Combo $w={200} $ml={7}>x64-Debug</Combo>
        <VSep $ml={7} />
        <Tool $w={14} $ml={7}><Play /></Tool>
        <Label $w={54} $ml={6}>Continuer</Label>
        <Caret $ml={3} />
        <VSep $ml={5} />
        <Tool $ml={10}><Fire /></Tool>
        <Caret $ml={3} />
        <VSep $ml={6} />
        <Tool $ml={8}><SearchFolder /></Tool>
        <VSep $ml={8} />
        <Tool $ml={4}><WinHome /></Tool>
        <Overflow $ml={6} />
        <Grip $ml={4} />
        <Tool $ml={6}><Pause2 /></Tool>
        <Tool $ml={6}><Stop /></Tool>
        <Tool $ml={6}><Restart /></Tool>
        <VSep $ml={6} />
        <Tool $ml={7}><ArrowNext /></Tool>
        <Tool $ml={6}><StepInto /></Tool>
        <Tool $ml={6}><StepOver /></Tool>
        <Tool $ml={6}><StepOut /></Tool>
        <VSep $ml={6} />
        <Tool $ml={7}><Swap /></Tool>
        <Overflow $ml={6} />
        <Grip $ml={5} />
        <Tool $ml={5}><Abc /></Tool>
        <VSep $ml={6} />
        <Tool $ml={6}><CursorDim /></Tool>
        <Tool $ml={7}><LinesDim /></Tool>
        <VSep $ml={6} />
        <Tool $ml={8}><IndentDim /></Tool>
        <Tool $ml={4}><OutdentDim /></Tool>
        <VSep $ml={8} />
        <Overflow $ml={6} $marks />
        <Tool $ml={21}><Copilot /></Tool>
        <Label $w={81} $ml={5}>GitHub Copilot</Label>
        <Tool $ml={6}><Person /></Tool>
      </ToolRow>

      <ToolRow $h={24} $pl={14}>
        <Grip />
        <Label $w={58} $ml={4}>Processus :</Label>
        <Combo $w={200} $ml={6}>[40344] unitTests.exe</Combo>
        <Tool $ml={9}><Lifecycle /></Tool>
        <Label $w={146} $ml={2} $dim>Événements du cycle de vie</Label>
        <Caret $ml={3} $dim />
        <Label $w={42} $ml={7}>Thread :</Label>
        <Combo $w={199} $ml={6}>[37252] Thread principal</Combo>
        <Tool $ml={7}><Flag /></Tool>
        <Tool $ml={5}><FlagsDim /></Tool>
        <Tool $ml={7}><FishDim /></Tool>
        <Label $w={77} $ml={6}>Frame de pile :</Label>
        <Combo $w={239} $ml={6}>RUN_ALL_TESTS</Combo>
        <Overflow $ml={7} />
      </ToolRow>

      <Work>
        <MainCol>
          <TopRow>
            <DocWell>
              <TabStrip>
                <ActiveDoc>
                  Instantané n°2...s.exe (1,48 s)
                  <Tool $w={12} $ml={7}><PinTab /></Tool>
                  <Tool $w={12} $ml={6}><CloseX s={11} c="#fff" /></Tool>
                </ActiveDoc>
                <DocTab $w={126}>Code Machine</DocTab>
                <DocTab $w={119}>unitTests.cpp</DocTab>
                <DocTab $w={242}>Pages de vue ...mble de CMake</DocTab>
                <TabFill />
                <DocTab $w={85}>
                  <TabLabel $w={41}>gtest.h</TabLabel>
                  <Tool $w={12} $ml={5}><PinSmall /></Tool>
                  <Tool $w={12} $ml={7}><CloseX s={11} c="#717171" /></Tool>
                </DocTab>
                <TabCaret $ml={3} />
                <Tool $w={13} $ml={7}><GearDim /></Tool>
              </TabStrip>
              <DocPanel>
                <DocLeft>
                  <HeadLine>
                    <Svg width="20" height="20" viewBox="0 0 20 20" fill="none">
                      <circle cx="10" cy="10" r="9" stroke="#0e70c0" strokeWidth="1.700" />
                      <path d="M15 10H6M9.500 6 5.500 10l4 4" stroke="#0e70c0" strokeWidth="1.700" />
                    </Svg>
                    <BigTitle>Instances de unitTests.exe!Circle</BigTitle>
                  </HeadLine>
                  <FilterBox>Filtrer les instances<SearchGlass s={13} /></FilterBox>
                  <GridHead $h={23} $mt={12}>
                    <HeadCell $w={145}>Instance</HeadCell>
                    <HeadCell $w={567}>Valeur</HeadCell>
                    <HeadCell $w={145}>Taille (octets)</HeadCell>
                    <HeadCell $w={95} $flex>Âge (ms)<DownSolid /></HeadCell>
                  </GridHead>
                  <InstanceList>
                    {instances.map(([a, b], i) => (
                      <InstanceRow key={a} $sel={i === 0}>
                        <InstName><Instance />{a}</InstName>
                        <InstValue>{b}</InstValue>
                        <InstSize>112</InstSize>
                        <InstAge>382</InstAge>
                      </InstanceRow>
                    ))}
                  </InstanceList>
                  <Splitter />
                  <SubTab>Pile des appels d'allocation</SubTab>
                  <GridHead $h={23} $mt={1}>
                    <HeadCell $w={567}>Nom</HeadCell>
                  </GridHead>
                  {stack.map((s, i) => (
                    <StackRow key={s} $sel={i === 1}><StackText>{s}</StackText></StackRow>
                  ))}
                </DocLeft>
                <VTrack $pt={5}>
                  <ArrowUp />
                  <VThumb $h={382} $mt={7} />
                  <ArrowDown $mt={20} />
                </VTrack>
                <HTrack $pl={8}>
                  <ArrowLeft />
                  <HThumb $w={865} $ml={3} />
                  <ArrowRight $ml={62} />
                </HTrack>
                <Corner />
              </DocPanel>
            </DocWell>

            <ToolWin $w={349}>
              <ToolBox>
                <WinTitle>
                  <WinName>Outils de diagnostic</WinName>
                  <Dots />
                  <WinControls />
                </WinTitle>
                <DiagBody>
                  <DiagMain>
                    <DiagBar>
                      <Tool><Gear /></Tool>
                      <VSep $ml={11} />
                      <Tool $ml={8}><Export /></Tool>
                      <VSep $ml={11} />
                      <Tool $ml={6}><ZoomGlass plus /></Tool>
                      <Tool $ml={12}><ZoomGlass /></Tool>
                      <Tool $ml={11}><ChartQ /></Tool>
                    </DiagBar>
                    <Session>Session de diagnostic : 1 secondes (1,487 s sélectionnées)</Session>
                    <Ruler><RulerArt /></Ruler>
                    <SectionHead $h={20}><Tri />Événements</SectionHead>
                    <ChartRow $h={23}>
                      <PauseCol><PauseBar /><PauseBar /></PauseCol>
                      <Event />
                    </ChartRow>
                    <SectionHead $h={24}>
                      <Tri />Mémoire du processus (Ko)
                      <LegendMark $ml={23}><Svg width="12" height="10" viewBox="0 0 12 10"><path d="M0 0h12L6 10Z" fill="#1e7ad1" /></Svg></LegendMark>
                      I...
                      <LegendMark $ml={9}><Svg width="12" height="12" viewBox="0 0 12 12"><circle cx="6" cy="6" r="6" fill="#7fb0cd" /></Svg></LegendMark>
                      O...
                    </SectionHead>
                    <ChartRow $h={69}>
                      <AxisCol $left><span>832</span><span>0</span></AxisCol>
                      <Memory />
                      <AxisCol><span>832</span><span>0</span></AxisCol>
                    </ChartRow>
                    <SectionHead $h={22}><Tri />UC (% de tous les processeurs)</SectionHead>
                    <ChartRow $h={35}>
                      <AxisCol $left><span>100</span></AxisCol>
                      <Cpu />
                      <AxisCol><span>100</span></AxisCol>
                    </ChartRow>
                  </DiagMain>
                  <VTrack $pt={5} $w={17}>
                    <ArrowUp />
                    <VThumb $h={194} $mt={7} $w={11} />
                    <ArrowDown $mt={44} />
                  </VTrack>
                </DiagBody>
                <LowerSplit />
                <SubTabs>
                  <SubTabItem $w={54}>Résumé</SubTabItem>
                  <SubTabItem $w={76}>Événements</SubTabItem>
                  <SubTabItem $w={144} $on>Utilisation de la mémoire</SubTabItem>
                  <SubTabItem $w={45}>Utilisati</SubTabItem>
                  <ArrowPair><MiniL /><MiniR /></ArrowPair>
                </SubTabs>
                <SnapPanel>
                  <SnapLine $h={24}><SnapBtn><Camera />Prendre un instantané</SnapBtn></SnapLine>
                  <SnapLine $h={27}>
                    <SnapBtn><Heap />Afficher le tas</SnapBtn>
                    <SnapBtn $ml={14}><XRed s={14} />Supprimer</SnapBtn>
                    <HeapBtn><Chip />Profilage du tas</HeapBtn>
                  </SnapLine>
                </SnapPanel>
                <SnapGrid>
                  <SnapCols>
                    <SnapHead>
                      <SnapHeadCell />
                      <SnapHeadCell>ID</SnapHeadCell>
                      <SnapHeadCell>Heure</SnapHeadCell>
                      <SnapHeadCell>Allocations (Diff.)</SnapHeadCell>
                      <SnapHeadCell>Taille du tas (Diff.)</SnapHeadCell>
                    </SnapHead>
                    <SnapRow>
                      <SnapCell $pad={2}><Heap /></SnapCell>
                      <SnapCell $right>1</SnapCell>
                      <SnapCell $right>1,47 s</SnapCell>
                      <SnapCell $pad={4}><Blue>0</Blue><Gray $ml={6}>( Non applicable )</Gray></SnapCell>
                      <SnapCell $pad={4}><Blue>0,00 Ko</Blue><Gray $ml={6}>( Non applicable )</Gray></SnapCell>
                    </SnapRow>
                    <SnapRow $sel>
                      <SnapCell $pad={2}><Heap /></SnapCell>
                      <SnapCell $pad={2}><Tag /><Plain $ml={2}>2</Plain></SnapCell>
                      <SnapCell $right>1,48 s</SnapCell>
                      <SnapCell $pad={38}><Plain>39</Plain><Plain $ml={11}>(+39</Plain><Plain $ml={4}><RedUp /></Plain><Plain $ml={5}>)</Plain></SnapCell>
                      <SnapCell $pad={24}><Plain>6,81 Ko</Plain><Plain $ml={7}>(+6,81 Ko</Plain><Plain $ml={4}><RedUp /></Plain></SnapCell>
                    </SnapRow>
                  </SnapCols>
                  <VTrack $pt={7} $w={17}>
                    <ArrowUp />
                    <VThumb $h={33} $mt={21} />
                    <ArrowDown $mt={5} />
                  </VTrack>
                </SnapGrid>
                <SnapBottom>
                  <HTrack $pl={57}>
                    <ArrowLeft />
                    <HThumb $w={203} $ml={4} />
                    <ArrowRight $ml={50} />
                  </HTrack>
                  <Corner />
                </SnapBottom>
              </ToolBox>
            </ToolWin>
          </TopRow>

          <BottomRow>
            <ToolWin $w={657}>
              <ToolBox $h={95}>
                <WinTitle>
                  <WinName>Automatique</WinName>
                  <Dots />
                  <WinControls />
                </WinTitle>
                <PanelBar>
                  <SearchBox $w={220}>Rechercher (Ctrl+E)<Plain><SearchGlass s={13} /><Caret /></Plain></SearchBox>
                  <Tool $ml={8}><ArrowThin dir={-1} /></Tool>
                  <Tool $ml={8}><ArrowThin dir={1} /></Tool>
                  <Label $w={137} $ml={5}>Profondeur de recherche :</Label>
                  <Combo $w={40} $ml={6}>3</Combo>
                  <VSep $ml={6} />
                  <Tool $ml={8}><FilterPin /></Tool>
                  <PinBox><AbPin /></PinBox>
                </PanelBar>
                <TableArea>
                  <THead $h={21}>
                    <THCell $w={218} $pl={13}>Nom</THCell>
                    <THCell $w={314}>Valeur</THCell>
                    <THCell $w={110} $last $pl={6}>Type</THCell>
                  </THead>
                  <AutoRow>
                    <AutoGutter><ReturnIcon /></AutoGutter>
                    <AutoCell $w={193} $pl={1}><Cube />testing::UnitTest::Run retourné</AutoCell>
                    <AutoCell $w={314}>0</AutoCell>
                    <AutoCell $w={105}>int</AutoCell>
                  </AutoRow>
                </TableArea>
              </ToolBox>
              <PanelTabs>
                <PanelTab $w={81} $on>Automatique</PanelTab>
                <PanelTab $w={98}>Variables locales</PanelTab>
                <PanelTab $w={52}>Espion 1</PanelTab>
              </PanelTabs>
            </ToolWin>

            <ToolWin $w={664}>
              <ToolBox $h={95}>
                <WinTitle>
                  <WinName>Points d'arrêt</WinName>
                  <Dots />
                  <WinControls />
                </WinTitle>
                <PanelBar $pl={7}>
                  <Label $w={47}>Nouveau</Label>
                  <Caret $ml={2} />
                  <VSep $ml={8} />
                  <Tool $ml={6}><XRed s={14} /></Tool>
                  <VSep $ml={7} />
                  <Tool $ml={7}><Balls x /></Tool>
                  <Tool $ml={6}><Balls /></Tool>
                  <VSep $ml={7} />
                  <Tool $ml={6}><Undo /></Tool>
                  <Tool $ml={6}><Redo /></Tool>
                  <VSep $ml={7} />
                  <Tool $ml={3}><ImportList /></Tool>
                  <Tool $ml={6}><ExportList /></Tool>
                  <VSep $ml={8} />
                  <Marks $w={8} $ml={128}>''</Marks>
                  <SearchBox $w={263} $ml={3}>Rechercher (Ctrl+E)<Plain><SearchGlass s={13} /><Caret /></Plain></SearchBox>
                </PanelBar>
                <TableArea>
                  <THead $h={24}>
                    <THCell $w={177}>Nom</THCell>
                    <THCell $w={65}>Étiquettes</THCell>
                    <THCell $w={65}>Condition</THCell>
                    <THCell $w={183}>Nombre d'accès</THCell>
                    <HeadArrow><ArrowUp /></HeadArrow>
                  </THead>
                  <BpGrid>
                    <BpList>
                      <BpRow>
                        <BpName><TreeDots /><Check><CheckMark /></Check><BpDot /><Plain $ml={4}>gtest.cc, ligne 5509</Plain></BpName>
                        <span>toujours arrêter (actuellement 1)</span>
                      </BpRow>
                      <BpRow $top>
                        <BpName $top><TreeStem /><Check $dim /><BpDot /></BpName>
                      </BpRow>
                    </BpList>
                    <VTrack $pt={0}><ArrowDown $mt={11} /></VTrack>
                  </BpGrid>
                </TableArea>
              </ToolBox>
              <PanelTabs>
                <PanelTab $w={90}>Pile des appels</PanelTab>
                <PanelTab $w={80} $on>Points d'arrêt</PanelTab>
                <PanelTab $w={136}>Paramètres d'exception</PanelTab>
                <PanelTab $w={117}>Fenêtre Commande</PanelTab>
                <PanelTab $w={112}>Fenêtre Exécution</PanelTab>
                <PanelTab $w={40}>Sortie</PanelTab>
              </PanelTabs>
            </ToolWin>
          </BottomRow>
        </MainCol>
        <Rail>
          <RailTab $h={248}>Explorateur de solutions - Affichage des dossi...</RailTab>
          <RailTab $h={92}>Modifications Git</RailTab>
        </Rail>
      </Work>

      <Status>
        <Comment />
        <StatusText $ml={7}>Prêt</StatusText>
        <Plain $ml={1098}><Repo /></Plain>
        <StatusText $ml={8}>Sélectionner le référentiel</StatusText>
        <Plain $ml={6}><UpCaret /></Plain>
      </Status>
      <BellWrap><Bell /><Badge>1</Badge></BellWrap>
      <Tip>Statut de la batterie : 99% restant</Tip>
    </Page>
  );
}
